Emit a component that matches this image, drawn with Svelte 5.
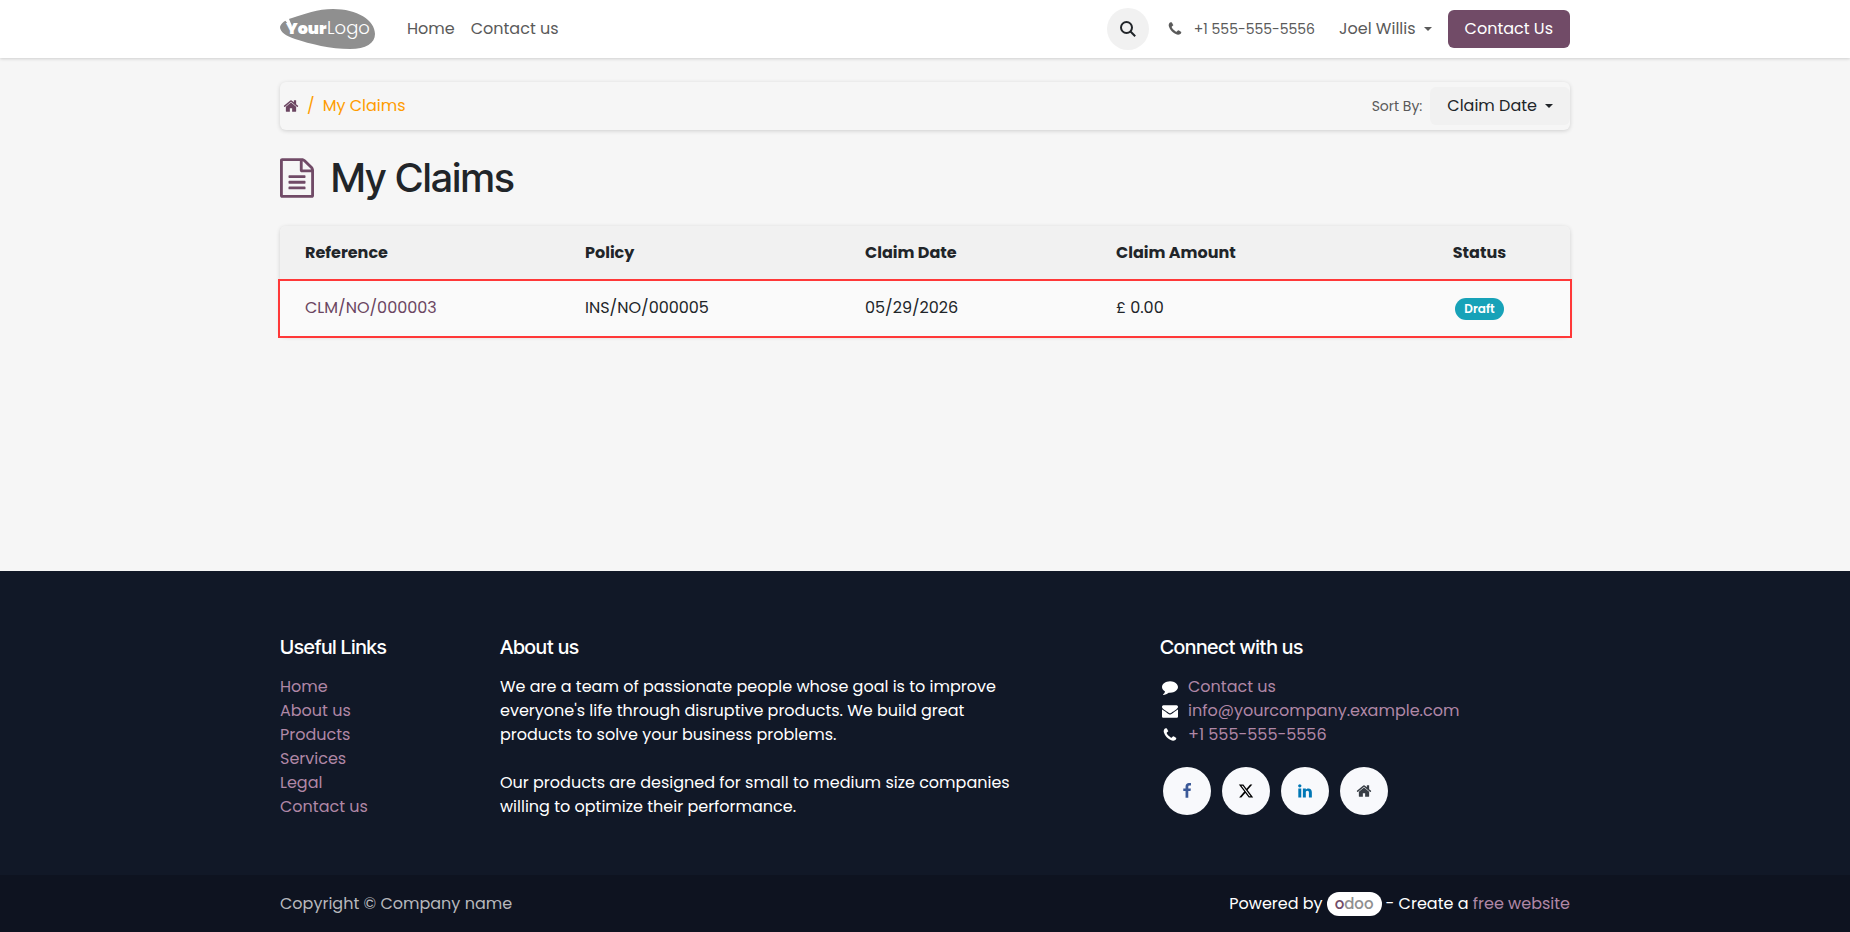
<script>
  const icons = {
    home: 'M1472 992v480q0 26-19 45t-45 19h-384v-384h-256v384h-384q-26 0-45-19t-19-45v-480q0-1 .5-3t.5-3l575-474 575 474q1 2 1 6zm223-69l-62 74q-8 9-21 11h-3q-13 0-21-7l-692-577-692 577q-12 8-24 7-13-2-21-11l-62-74q-8-10-7-23.5t11-21.5l719-599q32-26 76-26t76 26l244 204v-195q0-14 9-23t23-9h192q14 0 23 9t9 23v408l219 182q10 8 11 21.5t-7 23.5z',
    phone: 'M1600 1240q0 27-10 70.5t-21 68.5q-21 50-122 106-94 51-186 51-27 0-53-3.5t-57.5-12.5-47-14.5-55.5-20.5-49-18q-98-35-175-83-127-79-264-216t-216-264q-48-77-83-175-3-9-18-49t-20.5-55.5-14.5-47-12.5-57.5-3.5-53q0-92 51-186 56-101 106-122 25-11 68.5-21t70.5-10q14 0 21 3 18 6 53 76 11 19 30 54t35 63.5 31 53.5q3 4 17.5 25t21.5 35.5 7 28.5q0 20-28.5 50t-62 55-62 53-28.5 46q0 9 5 22.5t8.5 20.5 14 24 11.5 19q76 137 174 235t235 174q2 1 19 11.5t24 14 20.5 8.5 22.5 5q18 0 46-28.5t53-62 55-62 50-28.5q14 0 28.5 7t35.5 21.5 25 17.5q25 15 53.5 31t63.5 35 54 30q70 35 76 53 3 7 3 21z',
    envelope: 'M1792 710v794q0 66-47 113t-113 47h-1472q-66 0-113-47t-47-113v-794q44 49 101 87 362 246 497 345 57 42 92.5 65.5t94.5 48 110 24.5h2q51 0 110-24.5t94.5-48 92.5-65.5q170-123 498-345 57-39 100-87zm0-294q0 79-49 151t-122 123q-376 261-468 325-10 7-42.5 31t-54 38.5-52 32.5-57.5 27-50 9h-2q-23 0-50-9t-57.5-27-52-32.5-54-38.5-42.5-31q-91-64-262-182.5t-205-142.5q-62-42-117-115.5t-55-136.5q0-78 41.5-130t118.5-52h1472q65 0 112.5 47t47.5 113z',
    comment: 'M1792 896q0 174-120 321.5t-326 233-450 85.5q-70 0-145-8-198 175-460 242-49 14-114 22-17 2-30.5-9t-17.5-29v-1q-3-4-.5-12t2-10 4.5-9.5l6-9 7-8.5 8-9q7-8 31-34.5t34.5-38 31-39.5 32.5-51 27-59 26-76q-157-89-247.5-220t-90.5-281q0-130 71-248.5t191-204.5 286-136.5 348-50.5q244 0 450 85.5t326 233 120 321.5z',
    facebook: 'M1343 12v264h-157q-86 0-116 36t-30 108v189h293l-39 296h-254v759h-306v-759h-255v-296h255v-218q0-186 104-288.5t277-102.5q147 0 228 12z',
    linkedin: 'M477 625v991h-330v-991h330zm21-306q1 73-50.5 122t-135.5 49h-2q-82 0-132-49t-50-122q0-74 51.5-122.5t134.5-48.5 133 48.5 51 122.5zm1166 729v568h-329v-530q0-105-40.5-164.5t-126.5-59.5q-63 0-105.5 34.5t-63.5 85.5q-11 30-11 81v553h-329q2-399 2-647t-1-296l-1-48h329v144h-2q20-32 41-56t56.5-52 87-43.5 114.5-15.5q171 0 275 113.5t104 332.5z',
    x: 'M18.244 2.25h3.308l-7.227 8.26 8.502 11.24H16.17l-5.214-6.817L4.99 21.75H1.68l7.73-8.835L1.254 2.25H8.08l4.713 6.231zm-1.161 17.52h1.833L7.084 4.126H5.117z',
  };

  const usefulLinks = ['Home', 'About us', 'Products', 'Services', 'Legal', 'Contact us'];

  const contacts = [
    { icon: 'comment', text: 'Contact us' },
    { icon: 'envelope', text: 'info@yourcompany.example.com' },
    { icon: 'phone', text: '+1 555-555-5556' },
  ];

  const socials = [
    { name: 'facebook', label: 'Facebook', box: '0 0 1792 1792' },
    { name: 'x', label: 'X', box: '0 0 24 24' },
    { name: 'linkedin', label: 'LinkedIn', box: '0 0 1792 1792' },
    { name: 'home', label: 'Website', box: '0 0 1792 1792' },
  ];

  const claims = [
    { ref: 'CLM/NO/000003', policy: 'INS/NO/000005', date: '05/29/2026', amount: '£ 0.00', status: 'Draft' },
  ];
</script>

{#snippet icon(name, box = '0 0 1792 1792')}
  <svg class="icon {name}" viewBox={box} aria-hidden="true"><path d={icons[name]} /></svg>
{/snippet}

<div class="page">
  <header>
    <div class="container bar">
      <a class="logo" href="/" aria-label="Your Logo">
        <svg width="95" height="40" viewBox="0 0 95 40">
          <path
            d="M0 18C1 14 5 11 12 9C24 5 38 0 53 0C77 0 95 11 95 25C95 34 86 40 70 40C51 40 30 35 15 30C6 27 0 23 0 18Z"
            fill="#8f8f8f"
          />
          <path d="M4 10L9 10L12 17L8 15Z" fill="#fff" />
          <text x="6" y="25" class="logo-bold">Your</text>
          <text x="47" y="25" class="logo-thin">Logo</text>
        </svg>
      </a>
      <nav>
        <a href="/">Home</a>
        <a href="/contactus">Contact us</a>
      </nav>
      <div class="actions">
        <button class="search" aria-label="Search">
          <svg width="16" height="16" viewBox="0 0 16 16" fill="none" stroke="#212529" stroke-width="2">
            <circle cx="6.5" cy="6.5" r="5.5" />
            <path d="M10.5 10.5L15.2 15.2" />
          </svg>
        </button>
        <a class="call" href="tel:+15555555556">{@render icon('phone')}+1 555-555-5556</a>
        <button class="user">Joel Willis <span class="caret"></span></button>
        <a class="cta" href="/contactus">Contact Us</a>
      </div>
    </div>
  </header>

  <main class="container">
    <div class="toolbar">
      <div class="breadcrumb">
        <a href="/my/home" aria-label="Home">{@render icon('home')}</a>
        <span>/</span>
        <span>My Claims</span>
      </div>
      <div class="sort">
        <span class="sort-label">Sort By:</span>
        <button class="sort-btn">Claim Date <span class="caret"></span></button>
      </div>
    </div>

    <h1>
      <svg width="34" height="40" viewBox="0 0 24 28" aria-hidden="true">
        <path
          fill-rule="evenodd"
          d="M22.94 5.94C23.52 6.52 24 7.66 24 8.5V26.5C24 27.33 23.33 28 22.5 28H1.5C.67 28 0 27.33 0 26.5V1.5C0 .67.67 0 1.5 0H15.5C16.33 0 17.48.48 18.06 1.06ZM16 2.12V8H21.88C21.78 7.74 21.64 7.48 21.53 7.37L16.64 2.48C16.53 2.37 16.27 2.23 16 2.12ZM22 26V10H15.5C14.67 10 14 9.33 14 8.5V2H2V26Z"
        />
        <path d="M6.5 12h11q.5 0 .5.5v1q0 .5-.5.5h-11q-.5 0-.5-.5v-1q0-.5.5-.5zm0 4h11q.5 0 .5.5v1q0 .5-.5.5h-11q-.5 0-.5-.5v-1q0-.5.5-.5zm0 4h11q.5 0 .5.5v1q0 .5-.5.5h-11q-.5 0-.5-.5v-1q0-.5.5-.5z" />
      </svg>
      My Claims
    </h1>

    <table>
      <colgroup>
        <col class="col-ref" />
        <col class="col-ref" />
        <col class="col-date" />
        <col class="col-amount" />
        <col />
      </colgroup>
      <thead>
        <tr>
          <th>Reference</th>
          <th>Policy</th>
          <th>Claim Date</th>
          <th>Claim Amount</th>
          <th class="center">Status</th>
        </tr>
      </thead>
      <tbody>
        {#each claims as claim}
          <tr>
            <td><a href="/my/claims">{claim.ref}</a></td>
            <td>{claim.policy}</td>
            <td>{claim.date}</td>
            <td>{claim.amount}</td>
            <td class="center"><span class="badge">{claim.status}</span></td>
          </tr>
        {/each}
      </tbody>
    </table>
  </main>

  <footer>
    <div class="container columns">
      <section>
        <h2>Useful Links</h2>
        <ul>
          {#each usefulLinks as link}
            <li><a href="/">{link}</a></li>
          {/each}
        </ul>
      </section>
      <section class="about">
        <h2>About us</h2>
        <p>
          We are a team of passionate people whose goal is to improve everyone's life through
          disruptive products. We build great products to solve your business problems.
        </p>
        <p>
          Our products are designed for small to medium size companies willing to optimize their
          performance.
        </p>
      </section>
      <section>
        <h2>Connect with us</h2>
        <ul>
          {#each contacts as contact}
            <li class="contact">{@render icon(contact.icon)}<a href="/contactus">{contact.text}</a></li>
          {/each}
        </ul>
        <div class="socials">
          {#each socials as social}
            <a href="/" aria-label={social.label}>{@render icon(social.name, social.box)}</a>
          {/each}
        </div>
      </section>
    </div>
    <div class="copyright">
      <div class="container legal">
        <span class="muted">Copyright © Company name</span>
        <div class="powered">
          <span>Powered by</span>
          <a class="odoo" href="/"><span>o</span>doo</a>
          <span>- Create a <a href="/">free website</a></span>
        </div>
      </div>
    </div>
  </footer>
</div>

<style>
  :global(body) {
    background: #f6f6f6;
  }

  .page {
    display: flex;
    flex-direction: column;
    min-height: 100vh;
    font-family: Poppins, Inter, sans-serif;
    font-size: 16px;
    line-height: 24px;
    color: #212529;
  }

  .container {
    box-sizing: border-box;
    width: 100%;
    max-width: 1320px;
    margin: 0 auto;
    padding: 0 15px;
  }

  a {
    color: inherit;
    text-decoration: none;
  }

  button {
    border: 0;
    background: none;
    font: inherit;
    color: inherit;
    cursor: pointer;
  }

  .icon {
    width: 16px;
    height: 16px;
    fill: currentColor;
  }

  .caret {
    border-top: 4px solid;
    border-left: 4px solid transparent;
    border-right: 4px solid transparent;
  }

  header {
    background: #fff;
    box-shadow: 0 1px 3px rgba(0, 0, 0, 0.16);
    color: #5a5a5a;
  }

  .bar {
    display: flex;
    align-items: center;
    height: 58px;
  }

  .logo svg {
    display: block;
  }

  .logo text {
    fill: #fff;
  }

  .logo-bold {
    font-size: 16px;
    font-weight: 900;
  }

  .logo-thin {
    font-size: 18px;
    font-weight: 300;
  }

  nav {
    display: flex;
    gap: 16px;
    margin-left: 32px;
  }

  .actions {
    display: flex;
    align-items: center;
    margin-left: auto;
  }

  .search {
    display: flex;
    align-items: center;
    justify-content: center;
    width: 42px;
    height: 42px;
    padding: 0;
    border-radius: 50%;
    background: #f1f1f1;
  }

  .call {
    display: flex;
    align-items: center;
    gap: 11px;
    margin-left: 18px;
    font-size: 14px;
  }

  .user {
    display: flex;
    align-items: center;
    gap: 8px;
    margin: 0 16px 0 24px;
    padding: 0;
  }

  .cta {
    padding: 7px 17px;
    border-radius: 6px;
    background: #714b67;
    color: #fff;
  }

  main {
    flex: 1;
  }

  .toolbar {
    display: flex;
    justify-content: space-between;
    align-items: center;
    height: 48px;
    margin-top: 24px;
    border-radius: 6px;
    box-shadow: 0 1px 4px rgba(0, 0, 0, 0.16);
  }

  .breadcrumb {
    display: flex;
    gap: 8px;
    padding-left: 3px;
    color: #ff9c00;
  }

  .breadcrumb a {
    display: flex;
    align-items: center;
    color: #6b4561;
  }

  .sort {
    display: flex;
    align-items: center;
    gap: 8px;
  }

  .sort-label {
    font-size: 14px;
    color: #5a5a5a;
  }

  .sort-btn {
    display: flex;
    align-items: center;
    gap: 8px;
    padding: 7px 17px;
    border-radius: 6px;
    background: #f1f1f1;
  }

  h1 {
    display: flex;
    align-items: center;
    gap: 17px;
    margin: 24px 0;
    font-family: 'Inter Tight', Inter, sans-serif;
    font-size: 40px;
    font-weight: 500;
    line-height: 48px;
  }

  h1 svg {
    fill: #714b67;
  }

  table {
    width: 100%;
    border-spacing: 0;
    table-layout: fixed;
    border-radius: 6px;
    box-shadow: 0 1px 4px rgba(0, 0, 0, 0.16);
  }

  .col-ref {
    width: 280px;
  }

  .col-date {
    width: 251px;
  }

  .col-amount {
    width: 298px;
  }

  th,
  td {
    padding: 14px 25px 16px;
    text-align: left;
  }

  th {
    height: 25px;
    background: #f1f1f1;
    font-weight: 700;
  }

  th:first-child {
    border-top-left-radius: 6px;
  }

  th:last-child {
    border-top-right-radius: 6px;
  }

  td {
    height: 29px;
    padding: 12px 25px 14px;
    background: #fafafa;
  }

  td a {
    color: #6b4561;
  }

  tbody tr {
    outline: 2px solid #ff3838;
  }

  .center {
    text-align: center;
  }

  .badge {
    display: inline-block;
    padding: 0 9px;
    border-radius: 11px;
    background: #17a2b8;
    color: #fff;
    font-size: 12px;
    font-weight: 600;
    line-height: 22px;
  }

  footer {
    background: #111827;
    color: #fff;
  }

  .columns {
    display: grid;
    grid-template-columns: 2fr 6fr 4fr;
    gap: 0;
    padding: 64px 0 56px;
  }

  .columns section {
    padding: 0 15px;
  }

  .about p {
    max-width: 520px;
  }

  h2 {
    margin: 0 0 16px;
    font-family: 'Inter Tight', Inter, sans-serif;
    font-size: 20px;
    font-weight: 500;
    line-height: 24px;
  }

  p {
    margin: 0;
  }

  p + p {
    margin-top: 24px;
  }

  ul {
    margin: 0;
    padding: 0;
    list-style: none;
  }

  li,
  .powered span a {
    color: #b087a6;
  }

  .contact {
    display: flex;
    align-items: center;
    gap: 10px;
    padding-left: 2px;
  }

  .contact .icon {
    color: #fff;
  }

  .socials {
    display: flex;
    gap: 11px;
    margin: 20px 0 0 3px;
  }

  .socials a {
    display: flex;
    align-items: center;
    justify-content: center;
    width: 48px;
    height: 48px;
    border-radius: 50%;
    background: #f8f9fc;
    color: #383e45;
  }

  .socials :global(.facebook) {
    color: #3b5998;
  }

  .socials :global(.x) {
    color: #000;
  }

  .socials :global(.linkedin) {
    color: #0077b5;
  }

  .copyright {
    background: #0e1320;
  }

  .legal {
    display: flex;
    justify-content: space-between;
    align-items: center;
    height: 57px;
  }

  .muted {
    color: #b7b8bc;
  }

  .powered {
    display: flex;
    align-items: center;
    gap: 4px;
  }

  .odoo {
    padding: 0 8px;
    border-radius: 12px;
    background: #fff;
    color: #8f8f8f;
    font-size: 15px;
    font-weight: 500;
  }

  .odoo span {
    color: #714b67;
  }
</style>
